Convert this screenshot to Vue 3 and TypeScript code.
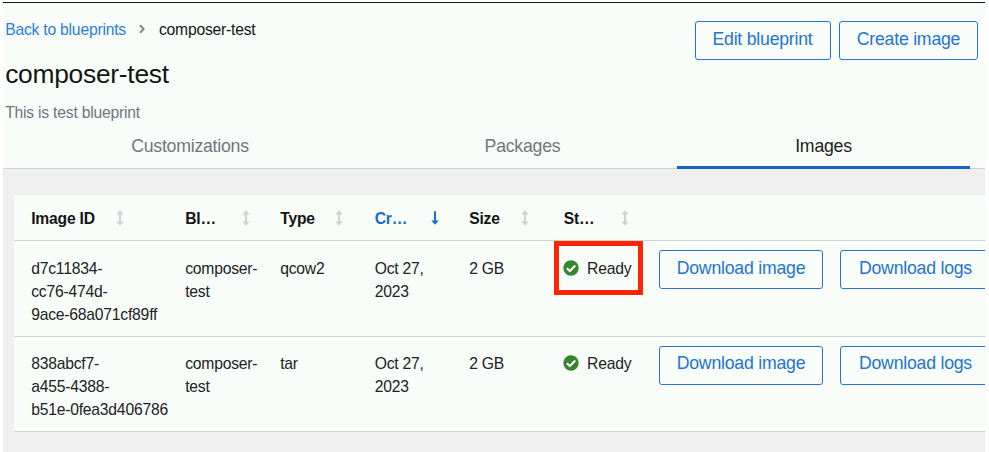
<script setup lang="ts">
interface Column {
  label: string
  active?: boolean
}

interface ComposerImage {
  id: string[]
  blueprint: string
  type: string
  created: string
  size: string
  status: string
  highlighted?: boolean
}

const tabs: string[] = ['Customizations', 'Packages', 'Images']
const activeTab = 'Images'

const columns: Column[] = [
  { label: 'Image ID' },
  { label: 'Bl…' },
  { label: 'Type' },
  { label: 'Cr…', active: true },
  { label: 'Size' },
  { label: 'St…' },
]

const images: ComposerImage[] = [
  {
    id: ['d7c11834-', 'cc76-474d-', '9ace-68a071cf89ff'],
    blueprint: 'composer-test',
    type: 'qcow2',
    created: 'Oct 27, 2023',
    size: '2 GB',
    status: 'Ready',
    highlighted: true,
  },
  {
    id: ['838abcf7-', 'a455-4388-', 'b51e-0fea3d406786'],
    blueprint: 'composer-test',
    type: 'tar',
    created: 'Oct 27, 2023',
    size: '2 GB',
    status: 'Ready',
  },
]
</script>

<template>
  <div class="page">
    <header class="header">
      <div class="heading">
        <nav class="breadcrumb">
          <a class="link">Back to blueprints</a>
          <svg class="chevron" viewBox="0 0 6 10"><path d="M1 1.2 4.7 5 1 8.8" /></svg>
          <span>composer-test</span>
        </nav>
        <h1 class="title">composer-test</h1>
        <p class="description">This is test blueprint</p>
      </div>
      <div class="actions">
        <button class="button">Edit blueprint</button>
        <button class="button create">Create image</button>
      </div>
    </header>

    <nav class="tabs">
      <button v-for="tab in tabs" :key="tab" class="tab" :class="{ active: tab === activeTab }">{{ tab }}</button>
    </nav>

    <main class="table">
      <div class="row head">
        <div v-for="column in columns" :key="column.label" class="cell label" :class="{ sorted: column.active }">
          <span>{{ column.label }}</span>
          <svg v-if="column.active" class="sort" viewBox="0 0 8 16">
            <path d="M3 1.2h2v9.2h2.8L4 14.8.2 10.4H3z" />
          </svg>
          <svg v-else class="sort" viewBox="0 0 8 16">
            <path d="M4 .2 7.7 4.4H5v7.2h2.7L4 15.8.3 11.6H3V4.4H.3z" />
          </svg>
        </div>
      </div>

      <div v-for="image in images" :key="image.id[0]" class="row body">
        <div class="cell"><div v-for="part in image.id" :key="part">{{ part }}</div></div>
        <div class="cell">{{ image.blueprint }}</div>
        <div class="cell">{{ image.type }}</div>
        <div class="cell created">{{ image.created }}</div>
        <div class="cell">{{ image.size }}</div>
        <div class="cell status">
          <svg class="check" viewBox="0 0 16 16">
            <circle cx="8" cy="8" r="7.7" />
            <path d="m3.9 8.2 2.9 2.9 5.5-5.5" />
          </svg>
          <span>{{ image.status }}</span>
          <div v-if="image.highlighted" class="highlight"></div>
        </div>
        <div class="row-actions">
          <button class="button download">Download image</button>
          <button class="button logs">Download logs</button>
        </div>
      </div>
    </main>
  </div>
</template>

<style>
body {
  background: #fff;
  overflow: hidden;
}
</style>

<style scoped>
.page {
  box-sizing: border-box;
  width: 982px;
  height: 450px;
  margin: 2px 0 0 3px;
  border-top: 1px solid #151515;
  overflow: hidden;
  background: #efefef;
  color: #222;
  font-family: "Liberation Sans", Arial, sans-serif;
  font-size: 15.7px;
  letter-spacing: -0.22px;
  line-height: 23px;
}

.header {
  display: flex;
  justify-content: space-between;
  box-sizing: border-box;
  height: 122px;
  padding: 15px 7px 0 2.2px;
  background: #f8fdfa;
}

.breadcrumb {
  display: flex;
  align-items: center;
  color: #151515;
}

.link {
  color: #2b7ddb;
}

.chevron {
  width: 6px;
  height: 10px;
  margin: 0 14px 2px 13px;
  fill: none;
  stroke: #80868a;
  stroke-width: 2;
}

.title {
  margin: 17px 0 0;
  font-size: 26.4px;
  font-weight: 400;
  letter-spacing: -0.28px;
  line-height: 32px;
  color: #151515;
}

.description {
  margin: 11px 0 0;
  color: #72767b;
}

.actions {
  display: flex;
  gap: 8.5px;
  padding-top: 3px;
}

.button {
  box-sizing: border-box;
  flex: none;
  width: 136px;
  height: 39px;
  padding: 0 0 3px;
  border: 1px solid #2b72d2;
  border-radius: 3px;
  background: transparent;
  color: #2374d1;
  font-family: inherit;
  font-size: 17.7px;
  letter-spacing: -0.23px;
  line-height: 26px;
  white-space: nowrap;
}

.create {
  width: 139px;
}

.tabs {
  display: grid;
  grid-template-columns: 365px 309px 293px;
  height: 43px;
  border-bottom: 1px solid #d0d1d1;
  background: #f8fdfa;
}

.tab {
  box-sizing: border-box;
  height: 44px;
  padding: 0 0 2px;
  border: 0;
  background: none;
  color: #72767b;
  font-family: inherit;
  font-size: 17.7px;
  letter-spacing: -0.23px;
}

.tab:first-child {
  padding-left: 9px;
}

.tab.active {
  padding: 1px 0 0;
  border-bottom: 3px solid #1762cc;
  color: #222;
}

.table {
  margin: 26px 0 0 11px;
  background: #f8fdfa;
}

.row {
  display: grid;
  box-sizing: border-box;
  grid-template-columns: 154px 95px 94.5px 94.5px 94.5px 95.3px 1fr;
  padding-left: 17.2px;
  border-bottom: 1px solid #d2d4d3;
}

.head {
  height: 46px;
  color: #151515;
  font-weight: 700;
}

.label {
  display: flex;
  align-items: center;
}

.label span {
  padding-top: 1px;
}

.sort {
  width: 8px;
  height: 16px;
  margin-left: 21px;
  fill: #d0d1d0;
}

.label:not(:first-child) .sort {
  margin-left: auto;
  margin-right: 30px;
}

.label:nth-child(3) .sort {
  margin-right: 32px;
}

.label:nth-child(4) .sort {
  margin-right: 30px;
}

.label:nth-child(5) .sort {
  margin-right: 35px;
}

.sorted {
  color: #1b6bd0;
}

.sorted .sort {
  fill: #1b6bd0;
}

.body {
  height: 96px;
}

.body .cell {
  padding-top: 16px;
}

.body:last-child {
  height: 95px;
}

.body:last-child .cell {
  padding-top: 15px;
}

.body:last-child .button {
  padding-bottom: 5px;
}

.created {
  padding-right: 30px;
}

.status {
  position: relative;
  display: flex;
  align-items: flex-start;
}

.check {
  width: 16px;
  height: 16px;
  margin: 3px 8px 0 -0.6px;
}

.check circle {
  fill: #36852f;
}

.check path {
  fill: none;
  stroke: #f8fdfa;
  stroke-width: 2.1;
}

.highlight {
  position: absolute;
  top: 0;
  left: -10px;
  box-sizing: border-box;
  width: 89px;
  height: 54px;
  border: 5px solid #fb2504;
}

.row-actions {
  display: flex;
  gap: 17px;
  min-width: 0;
  padding-top: 9px;
  overflow: hidden;
}

.download {
  width: 164px;
}

.logs {
  width: 151px;
}
</style>
